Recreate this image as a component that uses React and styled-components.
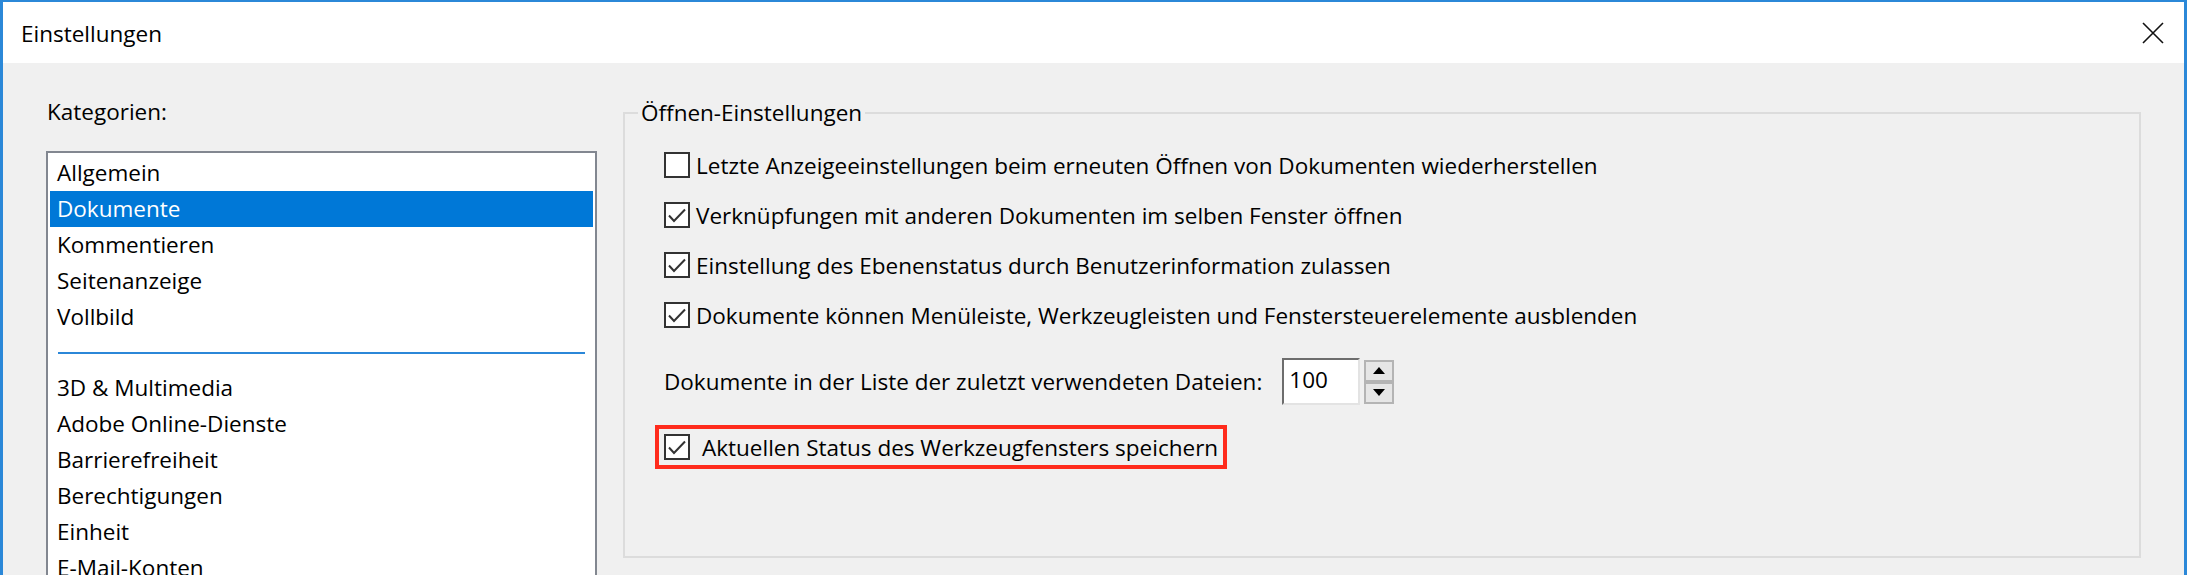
import * as React from "react";
import styled, {createGlobalStyle} from "styled-components";

const GlobalStyle = createGlobalStyle`
  html, body {
    margin: 0;
    padding: 0;
    background: #ffffff;
    overflow: hidden;
  }
  body {
    font-family: "Open Sans", "Noto Sans", sans-serif;
    font-size: 22.5px;
    color: #000;
  }
`

const categoriesTop = ['Allgemein', 'Dokumente', 'Kommentieren', 'Seitenanzeige', 'Vollbild']
const categoriesBottom = ['3D & Multimedia', 'Adobe Online-Dienste', 'Barrierefreiheit', 'Berechtigungen', 'Einheit', 'E-Mail-Konten']

const options = [
    {label: 'Letzte Anzeigeeinstellungen beim erneuten Öffnen von Dokumenten wiederherstellen', checked: false},
    {label: 'Verknüpfungen mit anderen Dokumenten im selben Fenster öffnen', checked: true},
    {label: 'Einstellung des Ebenenstatus durch Benutzerinformation zulassen', checked: true},
    {label: 'Dokumente können Menüleiste, Werkzeugleisten und Fenstersteuerelemente ausblenden', checked: true},
]

const CheckBox = ({checked}) => (
    <Box>
        {checked &&
            <svg width="22" height="22" viewBox="0 0 22 22">
                <path d="M3 11.5 L8 17 L19 5.5" fill="none" stroke="#333" strokeWidth="2"/>
            </svg>
        }
    </Box>
)

export default function App() {
    return (
        <>
            <GlobalStyle/>
            <Window>
                <TitleBar>
                    <Title>Einstellungen</Title>
                    <svg width="22" height="22" viewBox="0 0 22 22">
                        <path d="M1 1 L21 21 M21 1 L1 21" stroke="#111" strokeWidth="1.6"/>
                    </svg>
                </TitleBar>
                <Content>
                    <LeftColumn>
                        <Label>Kategorien:</Label>
                        <ListBox>
                            {categoriesTop.map(item =>
                                <ListItem key={item} selected={item === 'Dokumente'}>{item}</ListItem>
                            )}
                            <Separator><SeparatorLine/></Separator>
                            {categoriesBottom.map(item =>
                                <ListItem key={item}>{item}</ListItem>
                            )}
                        </ListBox>
                    </LeftColumn>
                    <Group>
                        <Legend>Öffnen-Einstellungen</Legend>
                        <GroupBody>
                            {options.map(option =>
                                <CheckRow key={option.label}>
                                    <CheckBox checked={option.checked}/>
                                    <span>{option.label}</span>
                                </CheckRow>
                            )}
                            <SpinRow>
                                <span>Dokumente in der Liste der zuletzt verwendeten Dateien:</span>
                                <SpinInput>100</SpinInput>
                                <SpinButtons>
                                    <SpinButton>
                                        <svg width="12" height="7" viewBox="0 0 12 7"><path d="M0 7 L6 0 L12 7 Z" fill="#000"/></svg>
                                    </SpinButton>
                                    <SpinButton>
                                        <svg width="12" height="7" viewBox="0 0 12 7"><path d="M0 0 L6 7 L12 0 Z" fill="#000"/></svg>
                                    </SpinButton>
                                </SpinButtons>
                            </SpinRow>
                            <Highlight>
                                <CheckBox checked/>
                                <span>Aktuellen Status des Werkzeugfensters speichern</span>
                            </Highlight>
                        </GroupBody>
                    </Group>
                </Content>
            </Window>
        </>
    )
}

const Window = styled.div`
  height: 575px;
  box-sizing: border-box;
  border: 3px solid #2b88d8;
  border-top-width: 2px;
  border-bottom: none;
  background: #f0f0f0;
  display: flex;
  flex-direction: column;
  overflow: hidden;
`

const TitleBar = styled.div`
  height: 61px;
  flex-shrink: 0;
  background: #ffffff;
  display: flex;
  align-items: center;
  justify-content: space-between;
  padding: 0 20px 0 18px;
`

const Title = styled.div`
  line-height: 30px;
  padding-top: 2px;
`

const Content = styled.div`
  flex: 1;
  min-height: 0;
  display: flex;
  align-items: flex-start;
  gap: 26px;
  padding: 34px 43px 0 43px;
`

const LeftColumn = styled.div`
  width: 551px;
  flex-shrink: 0;
  display: flex;
  flex-direction: column;
`

const Label = styled.div`
  line-height: 30px;
  padding-left: 1px;
  margin-bottom: 24px;
`

const ListBox = styled.div`
  border: 2px solid #828790;
  background: #ffffff;
  padding: 2px;
`

const ListItem = styled.div`
  height: 36px;
  line-height: 36px;
  padding-left: 7px;
  white-space: nowrap;
  background: ${({selected}) => selected ? '#0078d7' : 'transparent'};
  color: ${({selected}) => selected ? '#ffffff' : '#000000'};
`

const Separator = styled.div`
  height: 35px;
  display: flex;
  align-items: center;
  padding: 0 8px;
`

const SeparatorLine = styled.div`
  flex: 1;
  height: 2px;
  background: #2b87d8;
`

const Group = styled.fieldset`
  flex: 1;
  min-width: 0;
  margin: 1px 0 0;
  padding: 0;
  height: 460px;
  box-sizing: border-box;
  border: 2px solid #dcdcdc;
`

const Legend = styled.legend`
  margin-left: 13px;
  padding: 0 3px;
  line-height: 30px;
`

const GroupBody = styled.div`
  display: flex;
  flex-direction: column;
  align-items: flex-start;
  padding: 12px 0 0 39px;
`

const CheckRow = styled.div`
  height: 50px;
  display: flex;
  align-items: center;
  gap: 6px;
  white-space: nowrap;
`

const Box = styled.div`
  width: 26px;
  height: 26px;
  box-sizing: border-box;
  border: 2px solid #333333;
  background: #ffffff;
  flex-shrink: 0;
  display: flex;
`

const SpinRow = styled.div`
  margin-top: 18px;
  height: 47px;
  display: flex;
  align-items: center;
  white-space: nowrap;
`

const SpinInput = styled.div`
  margin-left: 20px;
  width: 78px;
  height: 47px;
  box-sizing: border-box;
  border-style: solid;
  border-width: 2px;
  border-color: #6d6d6d #e3e3e3 #e3e3e3 #6d6d6d;
  background: #ffffff;
  padding: 0 5px;
  line-height: 40px;
`

const SpinButtons = styled.div`
  margin-left: 4px;
  display: flex;
  flex-direction: column;
`

const SpinButton = styled.div`
  width: 30px;
  height: 22px;
  box-sizing: border-box;
  border: 2px solid #b4b4b4;
  background: #e6e6e6;
  display: flex;
  align-items: center;
  justify-content: center;
`

const Highlight = styled.div`
  margin: 20px 0 0 -9px;
  height: 44px;
  box-sizing: border-box;
  border: 4px solid #ff2b1c;
  padding: 0 5px;
  display: flex;
  align-items: center;
  gap: 12px;
  white-space: nowrap;
`
